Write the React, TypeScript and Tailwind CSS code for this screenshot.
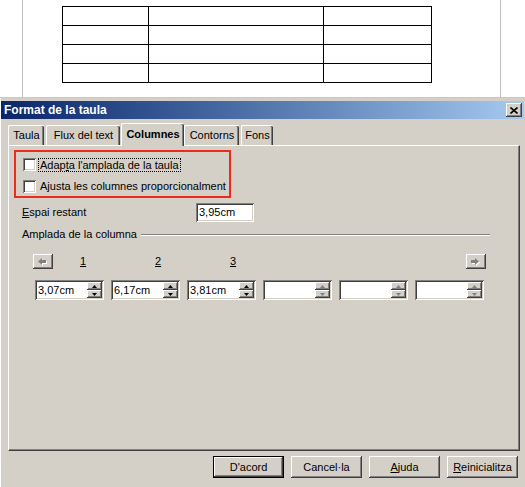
const raised =
  "bg-[#d4d0c8] shadow-[inset_-1px_-1px_0_#404040,inset_1px_1px_0_#ffffff,inset_-2px_-2px_0_#808080,inset_2px_2px_0_#d4d0c8]";
const sunken =
  "shadow-[inset_1px_1px_0_#808080,inset_-1px_-1px_0_#ffffff,inset_2px_2px_0_#404040,inset_-2px_-2px_0_#d4d0c8]";

function Checkbox() {
  return <div className={`w-[13px] h-[13px] shrink-0 bg-white ${sunken}`} />;
}

function Arrow({ dir }: { dir: "left" | "right" }) {
  const d = dir === "left" ? "M0 3.5 L4 0 V2 H8 V5 H4 V7 Z" : "M8 3.5 L4 0 V2 H0 V5 H4 V7 Z";
  return (
    <div className={`w-[20px] h-[15px] flex items-center justify-center ${raised}`}>
      <svg width="10" height="8" viewBox="0 0 10 8">
        <path d={d} fill="#ffffff" transform="translate(1 1)" />
        <path d={d} fill="#808080" />
      </svg>
    </div>
  );
}

function SpinField({ value }: { value?: string }) {
  const tri = value ? "#000000" : "#808080";
  return (
    <div className={`w-[69px] h-[20px] bg-white flex p-[2px] ${sunken}`}>
      <div className="flex-1 pl-[1px] leading-[16px]">{value}</div>
      <div className="w-[15px] flex flex-col">
        <div className={`h-[8px] flex items-center justify-center ${raised}`}>
          <svg width="5" height="3" viewBox="0 0 5 3">
            <path d="M2.5 0 L5 3 H0 Z" fill={tri} />
          </svg>
        </div>
        <div className={`h-[8px] flex items-center justify-center ${raised}`}>
          <svg width="5" height="3" viewBox="0 0 5 3">
            <path d="M0 0 H5 L2.5 3 Z" fill={tri} />
          </svg>
        </div>
      </div>
    </div>
  );
}

function Tab({ label, width, active, ml }: { label: string; width: string; active?: boolean; ml: string }) {
  return (
    <div
      className={`${width} ${ml} ${
        active ? "h-[23px] font-bold relative z-10 -mb-[1px]" : "h-[20px]"
      } bg-[#d4d0c8] border-t border-l border-white rounded-tl-[2px] rounded-tr-[2px] shadow-[inset_-1px_0_0_#404040,inset_-2px_0_0_#808080] flex items-center justify-center pb-[1px]`}
    >
      {label}
    </div>
  );
}

function Button({ children, isDefault }: { children: React.ReactNode; isDefault?: boolean }) {
  return (
    <div
      className={`w-[71px] h-[22px] flex items-center justify-center ${
        isDefault
          ? "bg-[#d4d0c8] border border-black shadow-[inset_-1px_-1px_0_#404040,inset_1px_1px_0_#ffffff,inset_-2px_-2px_0_#808080]"
          : raised
      }`}
    >
      {children}
    </div>
  );
}

export default function App() {
  const rows = [0, 1, 2, 3];
  return (
    <div className="w-[525px] h-[487px] overflow-hidden bg-white font-['Liberation_Sans',Arial,sans-serif] text-[11px] text-black">
      {/* Document */}
      <div className="h-[98px] bg-white border-b border-[#c8c8c8]">
        <div className="ml-[22px] w-[479px] h-full border-x border-[#c0c0c0] pt-[6px] pl-[39px]">
          <table className="border-collapse">
            <tbody>
              {rows.map((r) => (
                <tr key={r}>
                  <td className="border border-black w-[86px] h-[19px] p-0" />
                  <td className="border border-black w-[175px] h-[19px] p-0" />
                  <td className="border border-black w-[108px] h-[19px] p-0" />
                </tr>
              ))}
            </tbody>
          </table>
        </div>
      </div>

      {/* Dialog */}
      <div className="h-[389px] bg-[#d4d0c8] border-l border-white pt-[3px] pr-[1px]">
        {/* Title bar */}
        <div className="h-[18px] flex items-center justify-between pl-[3px] pr-[2px] bg-gradient-to-r from-[#0a246a] to-[#a6caf0]">
          <span className="text-white font-bold text-[12px]">Format de la taula</span>
          <div className={`w-[16px] h-[14px] flex items-center justify-center ${raised}`}>
            <svg width="8" height="7" viewBox="0 0 8 7">
              <path d="M0.5 0.5 L7.5 6.5 M7.5 0.5 L0.5 6.5" stroke="#000" strokeWidth="1.6" />
            </svg>
          </div>
        </div>

        {/* Tabs */}
        <div className="mt-[3px] pl-[7px] flex items-end h-[23px]">
          <Tab label="Taula" width="w-[36px]" ml="ml-0" />
          <Tab label="Flux del text" width="w-[74px]" ml="ml-[2px]" />
          <Tab label="Columnes" width="w-[63px]" ml="ml-[1px]" active />
          <Tab label="Contorns" width="w-[55px]" ml="ml-0" />
          <Tab label="Fons" width="w-[32px]" ml="ml-[2px]" />
        </div>

        {/* Panel */}
        <div className="ml-[7px] w-[512px] h-[306px] border-t border-l border-white border-r border-b border-r-[#404040] border-b-[#404040] shadow-[inset_-1px_-1px_0_#808080]">
          {/* Checkboxes (highlighted) */}
          <div className="mt-[4px] ml-[5px] w-[217px] h-[48px] border-2 border-[#ee2a1c] pl-[7px] pt-[6px] flex flex-col gap-[9px]">
            <div className="flex items-center h-[13px]">
              <Checkbox />
              <span className="ml-[2px] px-[1px] h-[14px] leading-[12px] border border-dotted border-black">
                Adap<u>t</u>a l'amplada de la taula
              </span>
            </div>
            <div className="flex items-center h-[13px]">
              <Checkbox />
              <span className="ml-[4px]">
                A<u>j</u>usta les columnes proporcionalment
              </span>
            </div>
          </div>

          {/* Espai restant */}
          <div className="mt-[5px] ml-[13px] flex items-center h-[19px]">
            <span className="w-[174px]">
              <u>E</u>spai restant
            </span>
            <div className={`w-[58px] h-[19px] bg-white pl-[3px] leading-[19px] ${sunken}`}>3,95cm</div>
          </div>

          {/* Amplada de la columna */}
          <div className="mt-[6px] ml-[13px] mr-[29px] flex items-center h-[13px]">
            <span>Amplada de la columna</span>
            <div className="flex-1 ml-[4px] h-[2px] border-t border-[#808080] border-b border-b-white" />
          </div>

          {/* Column labels */}
          <div className="mt-[13px] ml-[24px] mr-[33px] flex items-center h-[15px]">
            <Arrow dir="left" />
            <div className="ml-[27px] w-[75px]">
              <u>1</u>
            </div>
            <div className="w-[75px]">
              <u>2</u>
            </div>
            <div className="w-[75px]">
              <u>3</u>
            </div>
            <div className="flex-1" />
            <Arrow dir="right" />
          </div>

          {/* Column widths */}
          <div className="mt-[11px] ml-[26px] flex gap-[7px]">
            <SpinField value="3,07cm" />
            <SpinField value="6,17cm" />
            <SpinField value="3,81cm" />
            <SpinField />
            <SpinField />
            <SpinField />
          </div>
        </div>

        {/* Buttons */}
        <div className="mt-[5px] pl-[212px] flex gap-[7px]">
          <Button isDefault>D'acord</Button>
          <Button>Cancel·la</Button>
          <Button>
            <span>
              <u>A</u>juda
            </span>
          </Button>
          <Button>
            <span>
              <u>R</u>einicialitza
            </span>
          </Button>
        </div>
      </div>
    </div>
  );
}
